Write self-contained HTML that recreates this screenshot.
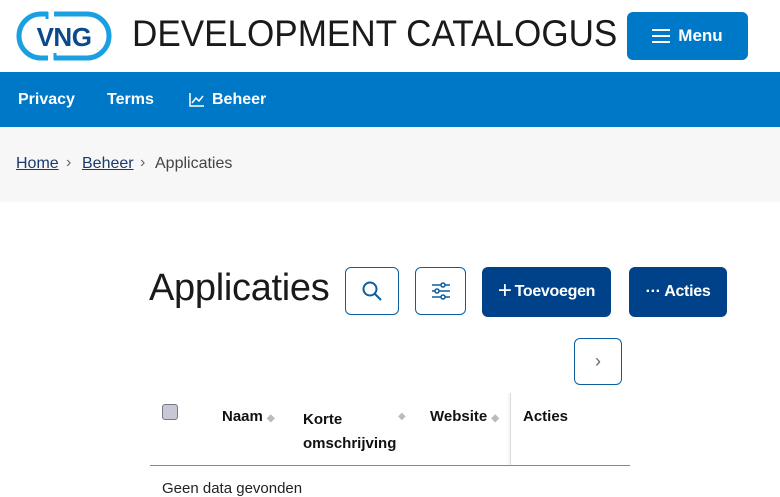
<!DOCTYPE html><html><head><style>
body{margin:0;width:780px;height:493px;overflow:hidden;font-family:"Liberation Sans",sans-serif;background:#fff;position:relative}
.a{position:absolute}
.btn{position:absolute;box-sizing:border-box;border-radius:6px;display:flex;align-items:center;justify-content:center}
.ol{border:1.5px solid #0b5ea0;background:#fff}
.dk{background:#00428a;color:#fff;font-size:16px;font-weight:bold;letter-spacing:-0.3px}
</style></head><body>
<svg class="a" style="left:16px;top:11px" width="96" height="50" viewBox="0 0 96 50">
<rect x="3" y="3" width="90" height="44" rx="22" fill="none" stroke="#1aa0e0" stroke-width="5"/>
<rect x="32" y="0" width="6" height="8" fill="#fff"/>
<rect x="32" y="42" width="6" height="8" fill="#fff"/>
<path d="M31 1V8M39 42V49" stroke="#1aa0e0" stroke-width="3"/>
<text x="48" y="35" text-anchor="middle" font-family="Liberation Sans" font-weight="bold" font-size="26" fill="#0a4a8c" letter-spacing="-0.5">VNG</text>
</svg>
<div class="a" style="left:132px;top:13px;font-size:37px;color:#1a1a1a;white-space:nowrap;transform:scaleX(0.948);transform-origin:left top">DEVELOPMENT CATALOGUS</div>
<div class="btn" style="left:627px;top:12px;width:121px;height:48px;background:#0078c8;color:#fff;font-weight:bold;font-size:17px">
<svg width="18" height="14" style="margin-right:8px"><path d="M0 1H18M0 7H18M0 13H18" stroke="#fff" stroke-width="2"/></svg>Menu</div>
<div class="a" style="left:0;top:72px;width:780px;height:55px;background:#0078c8;color:#fff;font-size:16px;font-weight:bold">
<span class="a" style="left:18px;top:19px">Privacy</span>
<span class="a" style="left:107px;top:19px">Terms</span>
<svg class="a" style="left:189px;top:21px" width="15" height="14"><path d="M1 0V13H15M3 10L7 5L10 8L14 3" fill="none" stroke="#fff" stroke-width="1.5"/></svg>
<span class="a" style="left:212px;top:19px">Beheer</span>
</div>
<div class="a" style="left:0;top:127px;width:780px;height:75px;background:#f7f7f7;font-size:16px;color:#333">
<span class="a" style="left:16px;top:28px;text-decoration:underline;color:#1a3a6a">Home</span>
<span class="a" style="left:66px;top:27px;color:#666">›</span>
<span class="a" style="left:82px;top:28px;text-decoration:underline;color:#1a3a6a">Beheer</span>
<span class="a" style="left:140px;top:27px;color:#666">›</span>
<span class="a" style="left:155px;top:28px;color:#444">Applicaties</span>
</div>
<div class="a" style="left:149px;top:267px;font-size:38px;color:#1a1a1a;letter-spacing:-0.3px">Applicaties</div>
<div class="btn ol" style="left:345px;top:267px;width:54px;height:48px"><svg width="22" height="22"><circle cx="9" cy="9" r="6.5" fill="none" stroke="#0b5ea0" stroke-width="2"/><path d="M14 14L20 20" stroke="#0b5ea0" stroke-width="2"/></svg></div>
<div class="btn ol" style="left:415px;top:267px;width:51px;height:48px"><svg width="20" height="20"><path d="M1 4H19M1 10H19M1 16H19" stroke="#0b5ea0" stroke-width="1.5"/><circle cx="12" cy="4" r="2" fill="#fff" stroke="#0b5ea0" stroke-width="1.5"/><circle cx="6" cy="10" r="2" fill="#fff" stroke="#0b5ea0" stroke-width="1.5"/><circle cx="12" cy="16" r="2" fill="#fff" stroke="#0b5ea0" stroke-width="1.5"/></svg></div>
<div class="btn dk" style="left:482px;top:267px;width:129px;height:50px"><span style="font-size:24px;font-weight:normal;margin-right:3px;margin-top:-3px">+</span>Toevoegen</div>
<div class="btn dk" style="left:629px;top:267px;width:98px;height:50px">··· Acties</div>
<div class="btn ol" style="left:574px;top:338px;width:48px;height:47px;color:#666;font-size:18px">›</div>
<div class="a" style="left:162px;top:404px;width:14px;height:14px;border:1px solid #778;border-radius:3px;background:#c8c8d4"></div>
<div class="a" style="left:222px;top:408px;font-size:15px;font-weight:bold;color:#111">Naam <span style="color:#bbb;font-size:10px">◆</span></div>
<div class="a" style="left:303px;top:408px;font-size:15px;font-weight:bold;color:#111;line-height:24px">Korte<br>omschrijving</div>
<div class="a" style="left:398px;top:411px;color:#bbb;font-size:10px">◆</div>
<div class="a" style="left:430px;top:408px;font-size:15px;font-weight:bold;color:#111">Website <span style="color:#bbb;font-size:10px">◆</span></div>
<div class="a" style="left:510px;top:393px;width:1px;height:72px;background:#ddd;box-shadow:-1px 0 2px #ddd"></div>
<div class="a" style="left:523px;top:408px;font-size:15px;font-weight:bold;color:#111">Acties</div>
<div class="a" style="left:150px;top:465px;width:480px;height:1px;background:#888"></div>
<div class="a" style="left:162px;top:480px;font-size:15px;color:#222">Geen data gevonden</div>
</body></html>
